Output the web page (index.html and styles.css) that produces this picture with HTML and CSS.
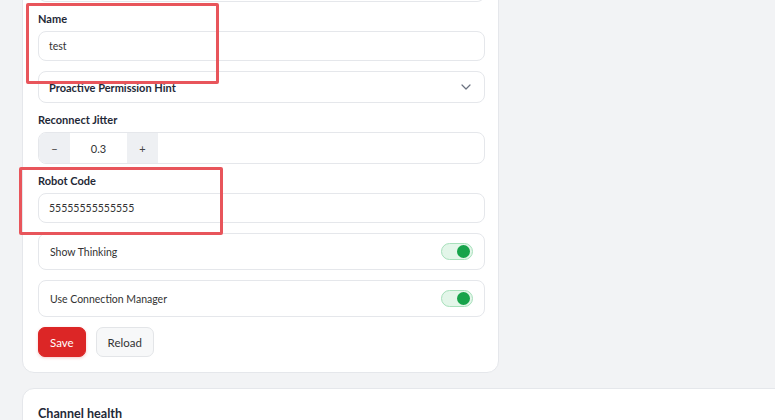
FILE: index.html
```html
<!DOCTYPE html>
<html>
<head>
<meta charset="utf-8">
<link rel="stylesheet" href="styles.css">
</head>
<body>
<div class="page">
  <section class="card form-card">
    <div class="input prev"></div>
    <div class="field">
      <label class="label">Name</label>
      <div class="input">test</div>
    </div>
    <div class="select">
      <span>Proactive Permission Hint</span>
      <svg class="chev" width="10" height="6" viewBox="0 0 10 6"><path d="M1 1l4 4 4-4" fill="none" stroke="#6b7280" stroke-width="1.2" stroke-linecap="round" stroke-linejoin="round"/></svg>
    </div>
    <div class="field">
      <label class="label">Reconnect Jitter</label>
      <div class="stepper">
        <span class="step-btn">−</span>
        <span class="step-val">0.3</span>
        <span class="step-btn">+</span>
      </div>
    </div>
    <div class="field">
      <label class="label">Robot Code</label>
      <div class="input">55555555555555</div>
    </div>
    <div class="toggle-row">
      <span>Show Thinking</span>
      <span class="switch"><span class="knob"></span></span>
    </div>
    <div class="toggle-row">
      <span>Use Connection Manager</span>
      <span class="switch"><span class="knob"></span></span>
    </div>
    <div class="actions">
      <button class="btn btn-primary">Save</button>
      <button class="btn btn-secondary">Reload</button>
    </div>
  </section>
  <section class="card health-card">
    <h2 class="card-title">Channel health</h2>
  </section>
  <div class="annot annot-1"></div>
  <div class="annot annot-2"></div>
</div>
</body>
</html>
```

FILE: styles.css
```css
* { box-sizing: border-box; }
html, body { margin: 0; padding: 0; }
body {
  background: #f2f3f5;
  font-family: Lato, "Noto Sans", sans-serif;
  color: #1f2937;
  width: 775px;
  height: 420px;
  overflow: hidden;
}
.page {
  position: relative;
  padding-left: 22px;
  display: flex;
  flex-direction: column;
  gap: 15px;
  margin-top: -31px;
}
.card {
  background: #fff;
  border: 1px solid #e5e7eb;
  border-radius: 12px;
}
.form-card {
  width: 477px;
  padding: 0 13px 15px 15px;
  display: flex;
  flex-direction: column;
  gap: 10px;
}
.field { display: flex; flex-direction: column; }
.label {
  font-size: 11px;
  font-weight: 700;
  line-height: 13px;
  height: 13px;
  margin-bottom: 6px;
  color: #1f2937;
}
.input {
  height: 30px;
  border: 1px solid #e5e7eb;
  border-radius: 8px;
  padding: 0 10px;
  font-size: 10.5px;
  line-height: 28px;
  color: #333;
}
.input.prev { height: 32px; border-top: none; border-radius: 0 0 8px 8px; }
.select {
  height: 32px;
  border: 1px solid #e5e7eb;
  border-radius: 8px;
  padding: 0 13px 0 10px;
  display: flex;
  align-items: center;
  justify-content: space-between;
  font-size: 11px;
  font-weight: 700;
  color: #1f2937;
}
.stepper {
  height: 32px;
  border: 1px solid #e5e7eb;
  border-radius: 8px;
  display: flex;
  overflow: hidden;
  font-size: 11px;
  color: #333;
}
.step-btn {
  width: 31px;
  background: #eef0f3;
  display: flex;
  align-items: center;
  justify-content: center;
  color: #444;
}
.step-val {
  width: 57px;
  display: flex;
  align-items: center;
  justify-content: center;
}
.toggle-row {
  height: 37px;
  border: 1px solid #e5e7eb;
  border-radius: 8px;
  padding: 0 11px 0 11px;
  display: flex;
  align-items: center;
  justify-content: space-between;
  font-size: 10.5px;
  color: #333;
}
.switch {
  width: 32px;
  height: 17px;
  border-radius: 9px;
  background: #e3f6e9;
  border: 1px solid #a7e0bb;
  display: flex;
  align-items: center;
  justify-content: flex-end;
  padding-right: 2px;
}
.knob {
  width: 13px;
  height: 13px;
  border-radius: 50%;
  background: #16a34a;
}
.actions { display: flex; gap: 10px; }
.btn {
  height: 30px;
  border-radius: 7px;
  padding: 0 11px;
  font-family: Lato, "Noto Sans", sans-serif;
  font-size: 11.5px;
}
.btn-primary {
  background: #dc2626;
  color: #fff;
  border: 1px solid #dc2626;
  box-shadow: 0 1px 3px rgba(220,38,38,0.25);
}
.btn-secondary {
  background: #f7f8f9;
  color: #333;
  border: 1px solid #e3e5e8;
}
.health-card {
  width: 800px;
  height: 80px;
  padding: 16px 15px;
}
.card-title {
  margin: 0;
  font-size: 12.6px;
  font-weight: 700;
  line-height: 18px;
  color: #1f2937;
}
.annot {
  position: absolute;
  border: 3px solid #e8555b;
  border-radius: 2px;
}
.annot-1 { left: 26px; top: 34px; width: 193px; height: 81px; }
.annot-2 { left: 19px; top: 198px; width: 204px; height: 68px; }
```
